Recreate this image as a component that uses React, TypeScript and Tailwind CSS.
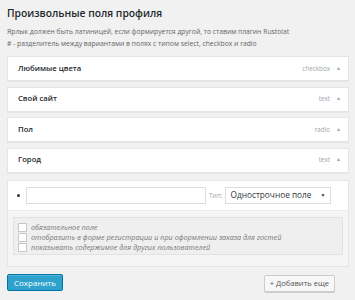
import React from "react";

type Field = {
    label: string
    type: string
}

const fields: Field[] = [
    { label: "Любимые цвета", type: "checkbox" },
    { label: "Свой сайт", type: "text" },
    { label: "Пол", type: "radio" },
    { label: "Город", type: "text" },
];

const options = [
    "обязательное поле",
    "отобразить в форме регистрации и при оформлении заказа для гостей",
    "показывать содержимое для других пользователей",
];

const FieldRow: React.FC<{ field: Field }> = ({ field }) => (
    <div className="h-[25px] bg-white border border-[#e5e5e5] shadow-[0_1px_1px_rgba(0,0,0,0.04)] flex items-center pl-[10px] pr-[7px]">
        <div className="text-[7.7px] font-semibold text-[#23282d]">{field.label}</div>
        <div className="ml-auto text-[6.3px] text-[#a0a5aa]">{field.type}</div>
        <div className="ml-[6px] text-[5px] text-[#a0a5aa]">▲</div>
    </div>
);

export default function App() {
    return (
        <div className="w-[355px] h-[300px] bg-[#f1f1f1] px-[7px] pr-[6px] pt-[4px] font-['Open_Sans',sans-serif] overflow-hidden">
            <div className="text-[10.3px] leading-[18px] font-semibold text-[#23282d]">Произвольные поля профиля</div>

            <div className="mt-[4px] text-[6.8px] leading-[12px] text-[#666]">
                <div>Ярлык должен быть латиницей, если формируется другой, то ставим плагин Rustolat</div>
                <div># - разделитель между вариантами в полях с типом select, checkbox и radio</div>
            </div>

            <div className="mt-[6px] flex flex-col gap-[5.5px]">
                {fields.map((f) => (
                    <FieldRow key={f.label} field={f} />
                ))}
            </div>

            <div className="mt-[7.5px] border border-[#e5e5e5] bg-[#f5f5f5]">
                <div className="h-[30px] bg-white border-b border-[#ececec] flex items-center pl-[9px]">
                    <div className="size-[3px] rounded-full bg-[#32373c]" />
                    <div className="ml-[6px] h-[17px] w-[180px] border border-[#ddd] bg-white" />
                    <div className="ml-[3px] text-[6.5px] text-[#a0a5aa]">Тип:</div>
                    <div className="ml-[3px] h-[17px] w-[106px] border border-[#ddd] bg-white flex items-center pl-[4px] pr-[5px]">
                        <div className="text-[8.3px] text-[#32373c]">Однострочное поле</div>
                        <div className="ml-auto text-[5px] text-[#32373c]">▼</div>
                    </div>
                </div>
                <div className="px-[5px] pt-[6px] pb-[11px]">
                    <div className="h-[38px] border border-[#e2e2e2] bg-[#efefef] pl-[4px] pt-[4px] flex flex-col">
                        {options.map((o) => (
                            <div key={o} className="h-[10px] flex items-center">
                                <div className="size-[9px] bg-white border border-[#c8c8c8]" />
                                <div className="ml-[4px] text-[7.25px] italic text-[#777]">{o}</div>
                            </div>
                        ))}
                    </div>
                </div>
            </div>

            <div className="mt-[7px] flex items-start">
                <button className="h-[17px] px-[6px] bg-[#2ea2cc] border border-[#0074a2] rounded-[2px] text-white text-[8px] leading-none shadow-[inset_0_1px_0_rgba(120,200,230,0.5)]">
                    Сохранить
                </button>
                <button className="ml-auto mr-[14px] mt-[1px] h-[17px] px-[5px] bg-[#f7f7f7] border border-[#ccc] rounded-[2px] text-[#555] text-[7.6px] leading-none shadow-[0_1px_0_#ccc]">
                    + Добавить еще
                </button>
            </div>
        </div>
    );
}
